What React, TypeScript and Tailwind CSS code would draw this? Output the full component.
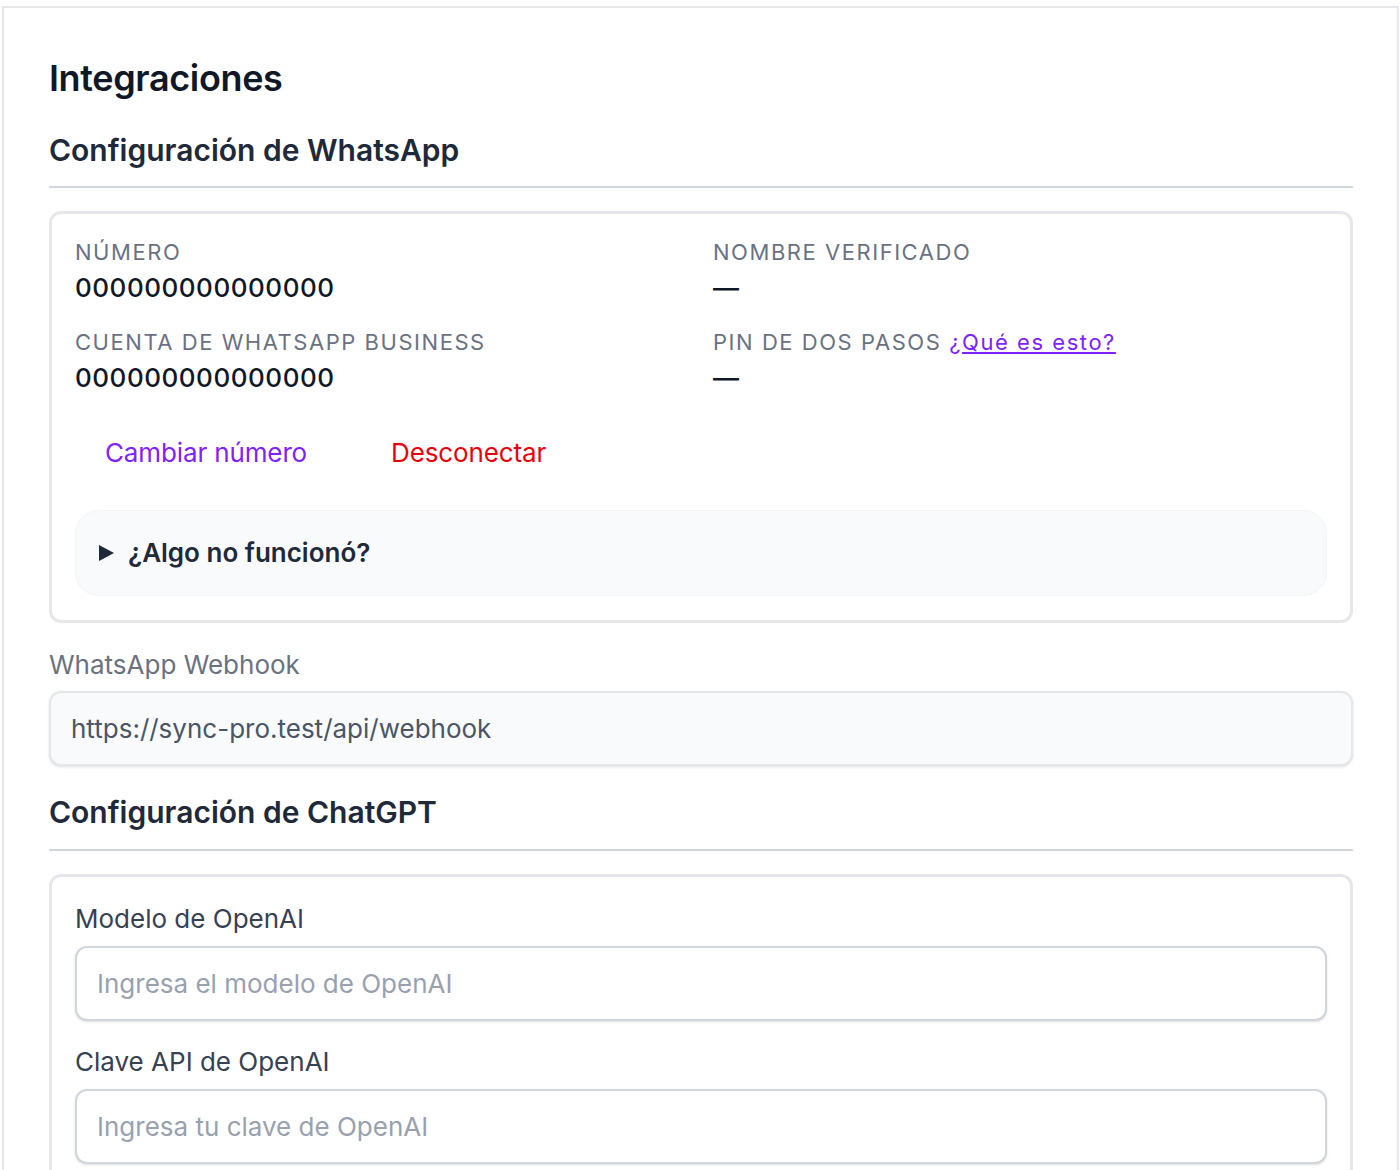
import React from "react";

const font = { fontFamily: "Inter, 'Noto Sans', sans-serif" };

function InfoItem({ label, value, extra }: { label: string; value: string; extra?: React.ReactNode }) {
  return (
    <div className="flex flex-col gap-[6px]">
      <div className="text-[22px] leading-[28px] uppercase tracking-[0.07em] text-gray-500">
        {label}
        {extra}
      </div>
      <div className="text-[26px] leading-[32px] font-medium text-gray-900 tracking-[0.02em]">{value}</div>
    </div>
  );
}

export default function App() {
  return (
    <div className="min-h-[1170px] bg-white overflow-hidden" style={font}>
      <div className="ml-[2px] mt-[6px] w-[1397px] min-h-[1164px] border-2 border-b-0 border-gray-200 bg-white pl-[45px] pr-[44px] pt-[50px]">
        <h1 className="text-[36px] leading-[40px] font-semibold text-gray-900 tracking-[-0.01em]">Integraciones</h1>

        <div className="mt-[34px] border-b-2 border-gray-300 pb-[18px]">
          <h2 className="text-[30px] leading-[36px] font-semibold text-gray-800">Configuración de WhatsApp</h2>
        </div>

        <div className="mt-[23px] rounded-[12px] border-[3px] border-gray-200 px-[23px] pt-[24px] pb-[24px]">
          <div className="grid grid-cols-2 gap-x-[24px] gap-y-[24px]">
            <InfoItem label="Número" value="000000000000000" />
            <InfoItem label="Nombre verificado" value="—" />
            <InfoItem label="Cuenta de WhatsApp Business" value="000000000000000" />
            <InfoItem
              label="PIN de dos pasos"
              value="—"
              extra={
                <a href="#" className="ml-[8px] normal-case text-violet-600 underline underline-offset-2">
                  ¿Qué es esto?
                </a>
              }
            />
          </div>

          <div className="mt-[27px] flex gap-[24px]">
            <button className="px-[30px] py-[16px] text-[26px] leading-[32px] tracking-[-0.005em] text-violet-600">Cambiar número</button>
            <button className="px-[30px] py-[16px] text-[26px] leading-[32px] tracking-[-0.005em] text-red-600">Desconectar</button>
          </div>

          <div className="mt-[25px] flex items-center gap-[14px] rounded-[24px] border border-gray-100 bg-gray-50 px-[23px] py-[26px]">
            <svg width="15" height="16" viewBox="0 0 15 16" className="shrink-0">
              <polygon points="0,0 15,8 0,16" fill="#1f2937" />
            </svg>
            <span className="text-[26px] leading-[32px] font-semibold text-gray-800">¿Algo no funcionó?</span>
          </div>
        </div>

        <div className="mt-[26px] text-[26px] leading-[32px] text-gray-500">WhatsApp Webhook</div>
        <div className="mt-[10px] flex h-[75px] items-center rounded-[12px] border-2 border-gray-200 bg-gray-50 px-[20px] shadow-sm">
          <span className="text-[26px] leading-[32px] text-gray-600">https://sync-pro.test/api/webhook</span>
        </div>

        <div className="mt-[28px] border-b-2 border-gray-300 pb-[19px]">
          <h2 className="text-[30px] leading-[36px] font-semibold text-gray-800">Configuración de ChatGPT</h2>
        </div>

        <div className="mt-[23px] rounded-[12px] border-[3px] border-b-0 border-gray-200 px-[23px] pt-[26px] pb-[22px]">
          <label className="block text-[26px] leading-[32px] font-normal text-gray-700">Modelo de OpenAI</label>
          <input
            className="mt-[11px] block h-[75px] w-full rounded-[12px] border-2 border-gray-300 bg-white px-[20px] text-[26px] text-gray-900 placeholder:text-gray-400 shadow-sm outline-none"
            placeholder="Ingresa el modelo de OpenAI"
            style={font}
          />
          <label className="mt-[25px] block text-[26px] leading-[32px] font-normal text-gray-700">Clave API de OpenAI</label>
          <input
            className="mt-[11px] block h-[75px] w-full rounded-[12px] border-2 border-gray-300 bg-white px-[20px] text-[26px] text-gray-900 placeholder:text-gray-400 shadow-sm outline-none"
            placeholder="Ingresa tu clave de OpenAI"
            style={font}
          />
        </div>
      </div>
    </div>
  );
}
